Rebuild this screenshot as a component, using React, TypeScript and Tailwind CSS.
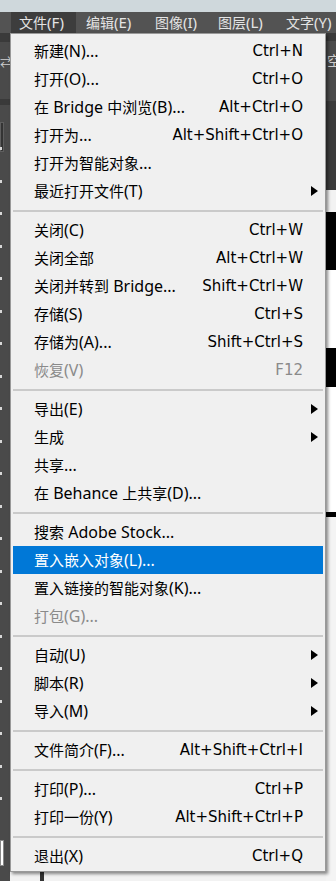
import React from "react";

type Item =
  | { sep: true }
  | { sep?: false; label: string; sc?: string; sub?: boolean; dis?: boolean; hi?: boolean };

const items: Item[] = [
  { label: "新建(N)...", sc: "Ctrl+N" },
  { label: "打开(O)...", sc: "Ctrl+O" },
  { label: "在 Bridge 中浏览(B)...", sc: "Alt+Ctrl+O" },
  { label: "打开为...", sc: "Alt+Shift+Ctrl+O" },
  { label: "打开为智能对象..." },
  { label: "最近打开文件(T)", sub: true },
  { sep: true },
  { label: "关闭(C)", sc: "Ctrl+W" },
  { label: "关闭全部", sc: "Alt+Ctrl+W" },
  { label: "关闭并转到 Bridge...", sc: "Shift+Ctrl+W" },
  { label: "存储(S)", sc: "Ctrl+S" },
  { label: "存储为(A)...", sc: "Shift+Ctrl+S" },
  { label: "恢复(V)", sc: "F12", dis: true },
  { sep: true },
  { label: "导出(E)", sub: true },
  { label: "生成", sub: true },
  { label: "共享..." },
  { label: "在 Behance 上共享(D)..." },
  { sep: true },
  { label: "搜索 Adobe Stock..." },
  { label: "置入嵌入对象(L)...", hi: true },
  { label: "置入链接的智能对象(K)..." },
  { label: "打包(G)...", dis: true },
  { sep: true },
  { label: "自动(U)", sub: true },
  { label: "脚本(R)", sub: true },
  { label: "导入(M)", sub: true },
  { sep: true },
  { label: "文件简介(F)...", sc: "Alt+Shift+Ctrl+I" },
  { sep: true },
  { label: "打印(P)...", sc: "Ctrl+P" },
  { label: "打印一份(Y)", sc: "Alt+Shift+Ctrl+P" },
  { sep: true },
  { label: "退出(X)", sc: "Ctrl+Q" },
];

const ticks = [148, 181, 213, 246, 278, 311, 343, 376, 408, 441, 473, 506, 538, 571, 603, 636, 668, 701, 733, 766, 798];

function Mixed({ text, latin }: { text: string; latin: string }) {
  const parts = text.split(/([\u3000-\u9fff]+)/).filter((p) => p.length > 0);
  return (
    <>
      {parts.map((p, i) =>
        /[\u3000-\u9fff]/.test(p) ? (
          <span key={i}>{p}</span>
        ) : (
          <span key={i} className={latin}>
            {p}
          </span>
        )
      )}
    </>
  );
}

function Arrow() {
  return (
    <svg width="7" height="10" viewBox="0 0 7 10" className="block">
      <polygon points="0,0 7,5 0,10" fill="#000" />
    </svg>
  );
}

export default function App() {
  return (
    <div
      className="relative w-[336px] h-[881px] overflow-hidden bg-[#4b4b4b]"
      style={{ fontFamily: '"Noto Sans", "Noto Sans CJK SC", sans-serif' }}
    >
      <div className="h-[12px] bg-[#cfd8dc]" />
      <div className="h-[21px] bg-[#535353] flex items-stretch pl-[11px] text-[14px] text-[#e4e4e4] leading-none">
        <div className="w-[65px] pl-[8px] flex items-center bg-[#3d3d3d] whitespace-nowrap">
          <Mixed text="文件(F)" latin="text-[15px]" />
        </div>
        <div className="w-[71px] pl-[10px] flex items-center whitespace-nowrap">
          <Mixed text="编辑(E)" latin="text-[15px]" />
        </div>
        <div className="w-[63px] pl-[8px] flex items-center whitespace-nowrap">
          <Mixed text="图像(I)" latin="text-[15px]" />
        </div>
        <div className="w-[68px] pl-[8px] flex items-center whitespace-nowrap">
          <Mixed text="图层(L)" latin="text-[15px]" />
        </div>
        <div className="pl-[8px] flex items-center whitespace-nowrap">
          <Mixed text="文字(Y)" latin="text-[15px]" />
        </div>
      </div>
      <div className="flex h-[848px]">
        <div className="w-[10px] flex flex-col">
          <div className="h-[9px] bg-[#3a3a3a]" />
          <div className="relative flex-1 bg-[#4a4a4a]">
            <div className="absolute left-0 top-[15px] text-[12px] leading-none text-[#cfcfcf]">⇄</div>
            <div className="absolute left-0 top-[57px] w-[10px] h-[6px] bg-[#3a3a3a]" />
            <div className="absolute left-0 top-[80px] w-[4px] h-[30px] bg-[#343434] border border-[#5e5e5e]" />
            {ticks.map((t) => (
              <div key={t} className="absolute left-0 w-[2px] h-[3px] bg-[#d8d8d8]" style={{ top: t - 43 }} />
            ))}
            <div className="absolute left-0 top-[798px] w-[4px] h-[26px] bg-white border border-[#888]" />
          </div>
        </div>
        <div className="flex-1 flex flex-col">
          <div className="flex-1" />
          <div className="h-[9px] bg-[#f2f2f2] relative">
            <div className="absolute left-[30px] top-0 w-[4px] h-[9px] bg-[#333]" />
          </div>
        </div>
        <div className="w-[10px] flex flex-col">
          <div className="h-[8px] bg-[#3a3a3a]" />
          <div className="h-[60px] bg-[#4b4b4b] relative overflow-hidden">
            <div className="absolute left-[1px] top-[13px] text-[14px] leading-none text-[#cfcfcf] whitespace-nowrap">空</div>
          </div>
          <div className="h-[89px] bg-[#3c3c3c]" />
          <div className="h-[22px] bg-[#f2f2f2]" />
          <div className="h-[58px] bg-black" />
          <div className="h-[78px] bg-white" />
          <div className="h-[39px] bg-black" />
          <div className="h-[125px] bg-white" />
          <div className="h-[5px] bg-black" />
          <div className="flex-1 bg-[#f4f4f4]" />
        </div>
      </div>

      <div className="absolute left-[10px] top-[33px] w-[316px] h-[839px] bg-[#f0f0f0] border border-[#999999] shadow-[2px_2px_3px_rgba(0,0,0,0.45)] pt-[3px] text-[15px] leading-none text-black">
        {items.map((it, i) =>
          it.sep ? (
            <div key={i} className="h-[11px] pt-[5px] mx-[2px]">
              <div className="h-[2px] bg-[#cacaca]" />
            </div>
          ) : (
            <div
              key={i}
              className={
                "h-[28px] mx-[2px] flex items-center pl-[21px] pr-[20px] relative whitespace-nowrap " +
                (it.hi ? "bg-[#0078d7] text-white" : it.dis ? "text-[#8a8a8a]" : "text-black")
              }
            >
              <span className="flex-1">
                <Mixed text={it.label} latin="text-[16px]" />
              </span>
              {it.sc ? (
                <span className="text-[15px]" style={{ fontFamily: '"DejaVu Sans", sans-serif' }}>
                  {it.sc}
                </span>
              ) : null}
              {it.sub ? (
                <span className="absolute right-[5px] top-[9px]">
                  <Arrow />
                </span>
              ) : null}
            </div>
          )
        )}
      </div>
    </div>
  );
}
